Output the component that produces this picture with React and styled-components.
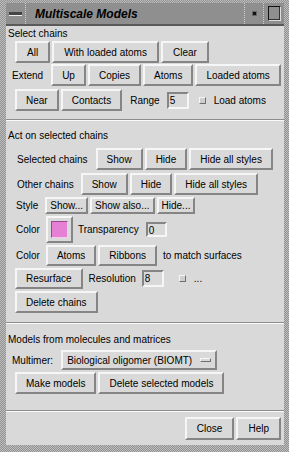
import React from "react";
import styled, { createGlobalStyle } from "styled-components";

const GlobalStyle = createGlobalStyle`
  html, body {
    margin: 0;
    padding: 0;
    background: #a8a8a8;
  }
  body {
    font-family: "Liberation Sans", Arial, sans-serif;
    font-size: 10px;
    color: #000;
  }
`;

const Frame = styled.div`
  width: 289px;
  height: 452px;
  box-sizing: border-box;
  padding: 3px 5px 7px 6px;
  background: repeating-conic-gradient(#929292 0 25%, #bdbdbd 0 50%) 0 0 / 2px 2px;
  display: flex;
  flex-direction: column;
`;

const TitleBar = styled.div`
  height: 21px;
  display: flex;
  background: #8f8f8f;
  border-bottom: 2px solid #5a5a5a;
`;

const TitleButton = styled.div`
  width: ${(p) => p.$w}px;
  display: flex;
  align-items: center;
  justify-content: center;
  box-sizing: border-box;
  border-right: ${(p) => (p.$sepRight ? "1px dotted #d0d0d0" : "none")};
`;

const MenuBar = styled.div`
  width: 13px;
  height: 3px;
  background: #444;
  border-bottom: 1px solid #eee;
`;

const Dot = styled.div`
  width: 3px;
  height: 3px;
  background: #111;
  border: 1px solid #666;
`;

const MaxBox = styled.div`
  width: 11px;
  height: 13px;
  border: 1px solid #111;
  border-right-color: #ddd;
  border-bottom-color: #ddd;
  box-shadow: inset -1px -1px 0 #333;
`;

const TitleText = styled.div`
  flex: 1;
  display: flex;
  align-items: center;
  padding-left: 9px;
  font-size: 12px;
  font-weight: bold;
  font-style: italic;
  border-right: 1px dotted #d0d0d0;
`;

const Content = styled.div`
  flex: 1;
  background: #d9d9d9;
  display: flex;
  flex-direction: column;
`;

const Section = styled.div`
  display: flex;
  flex-direction: column;
  padding-bottom: ${(p) => p.$pb || 0}px;
`;

const SectionTitle = styled.div`
  height: 13px;
  line-height: 13px;
  padding-left: 2px;
  margin-top: ${(p) => p.$mt || 0}px;
`;

const Separator = styled.div`
  height: 0;
  border-top: 1px solid #8c8c8c;
  border-bottom: 1px solid #fafafa;
`;

const Row = styled.div`
  display: flex;
  align-items: center;
  gap: 2px;
  height: ${(p) => p.$h || 22}px;
  margin-top: ${(p) => p.$mt || 0}px;
  padding-left: ${(p) => p.$indent || 0}px;
  justify-content: ${(p) => (p.$right ? "flex-end" : "flex-start")};
  padding-right: ${(p) => (p.$right ? 3 : 0)}px;
`;

const Label = styled.span`
  white-space: nowrap;
  margin-left: ${(p) => p.$ml || 0}px;
  margin-right: ${(p) => p.$mr || 0}px;
`;

const Button = styled.button`
  font: inherit;
  color: #000;
  height: ${(p) => p.$h || 22}px;
  padding: 0 ${(p) => (p.$px != null ? p.$px : 9)}px;
  background: #d9d9d9;
  border: 2px solid;
  border-color: #f6f6f6 #858585 #858585 #f6f6f6;
  box-sizing: border-box;
  white-space: nowrap;
  cursor: pointer;
`;

const Entry = styled.div`
  width: ${(p) => p.$w}px;
  height: ${(p) => p.$h || 17}px;
  box-sizing: border-box;
  border: 2px solid;
  border-color: #858585 #f6f6f6 #f6f6f6 #858585;
  padding-left: 1px;
  line-height: 13px;
  margin-left: ${(p) => p.$ml || 0}px;
`;

const Check = styled.span`
  width: 7px;
  height: 7px;
  box-sizing: border-box;
  border: 1px solid;
  border-color: #f6f6f6 #6f6f6f #6f6f6f #f6f6f6;
  background: #cfcfcf;
  margin: 0 ${(p) => p.$mr || 0}px 0 ${(p) => p.$ml || 0}px;
`;

const Swatch = styled.div`
  width: 27px;
  height: 27px;
  box-sizing: border-box;
  border: 2px solid;
  border-color: #f6f6f6 #858585 #858585 #f6f6f6;
  display: flex;
  align-items: center;
  justify-content: center;
`;

const SwatchColor = styled.div`
  width: 17px;
  height: 17px;
  box-sizing: border-box;
  background: ${(p) => p.$color};
  border: 1px solid;
  border-color: #9a4a8c #f8c8ef #f8c8ef #9a4a8c;
`;

const OptionMenu = styled.div`
  width: 156px;
  height: 20px;
  box-sizing: border-box;
  border: 2px solid;
  border-color: #f6f6f6 #858585 #858585 #f6f6f6;
  display: flex;
  align-items: center;
  padding: 0 4px 0 4px;
  gap: 6px;
`;

const OptionText = styled.span`
  flex: 1;
  white-space: nowrap;
`;

const Indicator = styled.span`
  width: 11px;
  height: 4px;
  box-sizing: border-box;
  border: 1px solid;
  border-color: #f6f6f6 #6f6f6f #6f6f6f #f6f6f6;
`;

export default function App() {
  return (
    <>
      <GlobalStyle />
      <Frame>
        <TitleBar>
          <TitleButton $w={20} $sepRight>
            <MenuBar />
          </TitleButton>
          <TitleText>Multiscale Models</TitleText>
          <TitleButton $w={19} $sepRight>
            <Dot />
          </TitleButton>
          <TitleButton $w={20}>
            <MaxBox />
          </TitleButton>
        </TitleBar>
        <Content>
          <Section $pb={8}>
            <SectionTitle $mt={1}>Select chains</SectionTitle>
            <Row $indent={9} $mt={1}>
              <Button $px={10}>All</Button>
              <Button $px={10}>With loaded atoms</Button>
              <Button $px={10}>Clear</Button>
            </Row>
            <Row $indent={6} $mt={1}>
              <Label $mr={6}>Extend</Label>
              <Button>Up</Button>
              <Button>Copies</Button>
              <Button>Atoms</Button>
              <Button>Loaded atoms</Button>
            </Row>
            <Row $indent={9} $mt={3}>
              <Button>Near</Button>
              <Button>Contacts</Button>
              <Label $ml={6}>Range</Label>
              <Entry $w={22} $ml={5}>5</Entry>
              <Check $ml={8} $mr={6} />
              <Label>Load atoms</Label>
            </Row>
          </Section>
          <Separator />
          <Section $pb={9}>
            <SectionTitle $mt={8}>Act on selected chains</SectionTitle>
            <Row $indent={11} $mt={6}>
              <Label $mr={6}>Selected chains</Label>
              <Button>Show</Button>
              <Button>Hide</Button>
              <Button>Hide all styles</Button>
            </Row>
            <Row $indent={11} $mt={3}>
              <Label $mr={5}>Other chains</Label>
              <Button>Show</Button>
              <Button>Hide</Button>
              <Button>Hide all styles</Button>
            </Row>
            <Row $indent={10} $mt={2} $h={17}>
              <Label $mr={5}>Style</Label>
              <Button $h={17} $px={3}>Show...</Button>
              <Button $h={17} $px={3}>Show also...</Button>
              <Button $h={17} $px={3}>Hide...</Button>
            </Row>
            <Row $indent={10} $mt={2} $h={27}>
              <Label $mr={4}>Color</Label>
              <Swatch>
                <SwatchColor $color="#e680d4" />
              </Swatch>
              <Label $ml={3}>Transparency</Label>
              <Entry $w={21} $h={15} $ml={5}>0</Entry>
            </Row>
            <Row $indent={10} $mt={2} $h={21}>
              <Label $mr={4}>Color</Label>
              <Button $h={21}>Atoms</Button>
              <Button $h={21}>Ribbons</Button>
              <Label $ml={4}>to match surfaces</Label>
            </Row>
            <Row $indent={9} $mt={2} $h={21}>
              <Button $h={21}>Resurface</Button>
              <Label $ml={4}>Resolution</Label>
              <Entry $w={22} $ml={4}>8</Entry>
              <Check $ml={13} $mr={6} />
              <Label>...</Label>
            </Row>
            <Row $indent={9} $mt={2}>
              <Button>Delete chains</Button>
            </Row>
          </Section>
          <Separator />
          <Section $pb={16}>
            <SectionTitle $mt={9}>Models from molecules and matrices</SectionTitle>
            <Row $indent={6} $mt={4} $h={20}>
              <Label $mr={6}>Multimer:</Label>
              <OptionMenu>
                <OptionText>Biological oligomer (BIOMT)</OptionText>
                <Indicator />
              </OptionMenu>
            </Row>
            <Row $indent={9} $mt={2}>
              <Button>Make models</Button>
              <Button>Delete selected models</Button>
            </Row>
          </Section>
          <Separator />
          <Row $right $mt={5} $h={23}>
            <Button $h={23} $px={10}>Close</Button>
            <Button $h={23} $px={10}>Help</Button>
          </Row>
        </Content>
      </Frame>
    </>
  );
}
